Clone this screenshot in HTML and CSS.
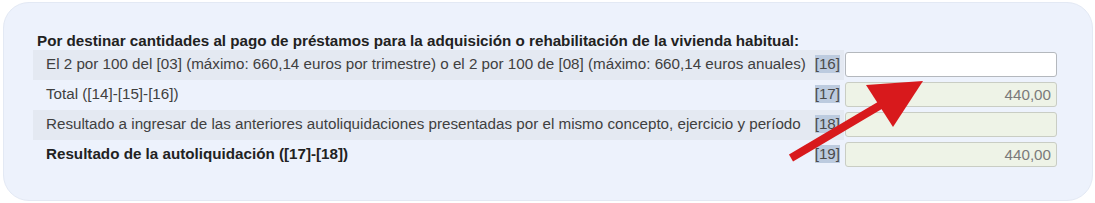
FILE: index.html
```html
<!DOCTYPE html>
<html lang="es">
<head>
<meta charset="utf-8">
<link rel="stylesheet" href="styles.css">
</head>
<body>
<div class="card">
  <div class="heading">Por destinar cantidades al pago de préstamos para la adquisición o rehabilitación de la vivienda habitual:</div>
  <div class="rows">
    <div class="row">
      <div class="cell band"><span class="label">El 2 por 100 del [03] (máximo: 660,14 euros por trimestre) o el 2 por 100 de [08] (máximo: 660,14 euros anuales)</span><span class="code">[16]</span></div>
      <div class="field empty"></div>
    </div>
    <div class="row">
      <div class="cell"><span class="label">Total ([14]-[15]-[16])</span><span class="code">[17]</span></div>
      <div class="field calc">440,00</div>
    </div>
    <div class="row">
      <div class="cell band"><span class="label">Resultado a ingresar de las anteriores autoliquidaciones presentadas por el mismo concepto, ejercicio y período</span><span class="code">[18]</span></div>
      <div class="field calc"></div>
    </div>
    <div class="row">
      <div class="cell"><span class="label bold">Resultado de la autoliquidación ([17]-[18])</span><span class="code">[19]</span></div>
      <div class="field calc">440,00</div>
    </div>
  </div>
  <svg class="arrow" width="1095" height="203" viewBox="0 0 1095 203" aria-hidden="true">
    <line x1="791" y1="158" x2="884" y2="103" stroke="#d8191c" stroke-width="8"/>
    <polygon points="866,85 923,81 893,127" fill="#d8191c"/>
  </svg>
</div>
</body>
</html>
```

FILE: styles.css
```css
html, body {
  margin: 0;
  padding: 0;
  background: #ffffff;
}

body {
  font-family: "Liberation Sans", Arial, sans-serif;
  font-size: 15.2px;
  color: #333;
}

.card {
  margin: 2px 2px 2px 3px;
  height: 199px;
  box-sizing: border-box;
  background: #edf2fc;
  border: 1px solid #e3e9f4;
  border-radius: 26px;
  padding: 29px 35px 0 29px;
}

.heading {
  font-weight: bold;
  color: #222;
  line-height: 18px;
  margin-left: 4px;
}

.rows {
  display: flex;
  flex-direction: column;
}

.row {
  display: flex;
  align-items: flex-start;
  height: 30px;
}

.cell {
  flex: 1;
  height: 100%;
  box-sizing: border-box;
  display: flex;
  align-items: center;
  justify-content: space-between;
  padding-left: 13px;
  padding-bottom: 3px;
}

.band {
  background: #e4e9f2;
}

.label {
  color: #404040;
  white-space: nowrap;
}

.label.bold {
  font-weight: bold;
  color: #222;
}

.code {
  background: #bccbdf;
  color: #4a4a4a;
  line-height: 18px;
  margin-right: 4px;
}

.field {
  width: 212px;
  height: 25px;
  margin-top: 2px;
  box-sizing: border-box;
  border: 1px solid #b4b8bd;
  border-radius: 3px;
  margin-left: 1px;
  padding-right: 5px;
  text-align: right;
  line-height: 23px;
  color: #7a7a7a;
}

.field.empty {
  background: #ffffff;
}

.field.calc {
  background: #eef3e7;
  border-color: #c9cdc4;
}

.arrow {
  position: absolute;
  left: 0;
  top: 0;
  pointer-events: none;
}
```
